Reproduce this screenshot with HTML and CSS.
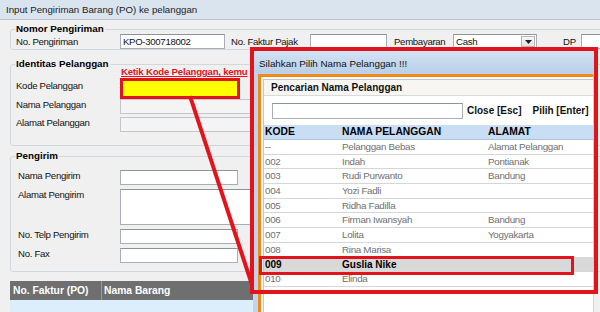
FILE: index.html
```html
<!DOCTYPE html>
<html>
<head>
<meta charset="utf-8">
<link rel="stylesheet" href="styles.css">
</head>
<body>
<div class="titlebar">Input Pengiriman Barang (PO) ke pelanggan</div>
<div class="content">
  <fieldset class="group g1">
    <legend>Nomor Pengiriman</legend>
    <div class="row1">
      <span class="lbl w104">No. Pengiriman</span>
      <div class="tb w105">KPO-300718002</div>
      <span class="lbl ml6 w79">No. Faktur Pajak</span>
      <div class="tb w77"></div>
      <span class="lbl ml7 w59">Pembayaran</span>
      <div class="tb combo w84"><span>Cash</span><span class="ddbtn"><svg width="7" height="4" viewBox="0 0 7 4"><path d="M0 0h7L3.5 4z" fill="#222"/></svg></span></div>
      <span class="lbl ml26 w18">DP</span>
      <div class="tb w100"></div>
    </div>
  </fieldset>

  <fieldset class="group g2">
    <legend>Identitas Pelanggan</legend>
    <div class="form f2">
      <span class="lbl up">Kode Pelanggan</span>
      <div class="tb kode"></div>
      <span class="lbl">Nama Pelanggan</span>
      <div class="tb dis w140"></div>
      <span class="lbl">Alamat Pelanggan</span>
      <div class="tb dis w140"></div>
    </div>
  </fieldset>

  <fieldset class="group g3">
    <legend>Pengirim</legend>
    <div class="form f3">
      <span class="lbl">Nama Pengirim</span>
      <div class="tb w118"></div>
      <span class="lbl">Alamat Pengirim</span>
      <div class="tb area w140"></div>
      <span class="lbl">No. Telp Pengirim</span>
      <div class="tb w118"></div>
      <span class="lbl">No. Fax</span>
      <div class="tb w118"></div>
    </div>
  </fieldset>

  <div class="table">
    <div class="thead">
      <div class="th c1">No. Faktur (PO)</div>
      <div class="th c2">Nama Barang</div>
    </div>
    <div class="trow"></div>
  </div>
</div>

<div class="hint">Ketik Kode Pelanggan, kemu</div>

<svg class="arrow" width="600" height="312" viewBox="0 0 600 312">
  <line x1="190" y1="96" x2="255" y2="294" stroke="#e2131b" stroke-width="4"/>
</svg>

<div class="dlg">
  <div class="dlg-title">Silahkan Pilih Nama Pelanggan !!!</div>
  <div class="panel">
    <div class="inner">
      <div class="phead">Pencarian Nama Pelanggan</div>
      <div class="search">
        <div class="tb w191"></div>
        <span class="btn">Close [Esc]</span>
        <span class="btn ml11">Pilih [Enter]</span>
      </div>
      <div class="grid">
        <div class="grow ghead"><span class="k">KODE</span><span class="n">NAMA PELANGGAN</span><span class="a">ALAMAT</span></div>
        <div class="grow"><span class="k">--</span><span class="n">Pelanggan Bebas</span><span class="a">Alamat Pelanggan</span></div>
        <div class="grow"><span class="k">002</span><span class="n">Indah</span><span class="a">Pontianak</span></div>
        <div class="grow"><span class="k">003</span><span class="n">Rudi Purwanto</span><span class="a">Bandung</span></div>
        <div class="grow"><span class="k">004</span><span class="n">Yozi Fadli</span><span class="a"></span></div>
        <div class="grow"><span class="k">005</span><span class="n">Ridha Fadilla</span><span class="a"></span></div>
        <div class="grow"><span class="k">006</span><span class="n">Firman Iwansyah</span><span class="a">Bandung</span></div>
        <div class="grow"><span class="k">007</span><span class="n">Lolita</span><span class="a">Yogyakarta</span></div>
        <div class="grow"><span class="k">008</span><span class="n">Rina Marisa</span><span class="a"></span></div>
        <div class="grow sel"><span class="k">009</span><span class="n">Guslia Nike</span><span class="a"></span></div>
        <div class="grow"><span class="k">010</span><span class="n">Elinda</span><span class="a"></span></div>
      </div>
    </div>
  </div>
</div>

<div class="redframe"></div>
<div class="redrow"></div>
</body>
</html>
```

FILE: styles.css
```css
* { box-sizing: border-box; }
html, body { margin: 0; padding: 0; }
body {
  width: 600px;
  height: 312px;
  overflow: hidden;
  position: relative;
  background: #f0f0f0;
  font-family: "Liberation Sans", Arial, sans-serif;
  font-size: 9.6px;
  letter-spacing: -0.3px;
  color: #111;
}
.titlebar {
  height: 20px;
  background: #dae4ef;
  border-bottom: 1px solid #bcc5cf;
  font-size: 9.7px;
  letter-spacing: 0;
  line-height: 12px;
  padding: 4px 0 0 6px;
  color: #1a1a1a;
}
.content { padding: 4px 0 0 10px; width: 760px; }

.group {
  border: 1px solid #d0d8de;
  border-radius: 3px;
  margin: 0;
  padding: 0;
  min-width: 0;
}
.group legend {
  font-weight: bold;
  font-size: 9.8px;
  letter-spacing: 0;
  line-height: 10px;
  padding: 0 1px;
  margin-left: 4px;
  color: #000;
}
.g2 { margin-top: 9px; }
.g3 { margin-top: 5px; }

.lbl { white-space: nowrap; }
.w104 { width: 104px; }
.w79 { width: 79px; }
.w59 { width: 59px; }
.w18 { width: 18px; }
.w105 { width: 105px; }
.w77 { width: 77px; }
.w84 { width: 84px; }
.w100 { width: 100px; }
.w118 { width: 118px; }
.w140 { width: 140px; }
.w191 { width: 191px; }
.ml6 { margin-left: 6px; }
.ml7 { margin-left: 7px; }
.ml11 { margin-left: 11px; }
.ml26 { margin-left: 26px; }

.row1 {
  display: flex;
  align-items: center;
  padding-left: 5px;
  height: 15px;
}
.tb {
  height: 15px;
  background: #fff;
  border: 1px solid #a9adb4;
  border-top-color: #8d939b;
  padding: 0 2px;
  line-height: 13px;
  white-space: nowrap;
  flex: none;
}
.tb.dis { background: #f4f4f4; border-color: #c3c6cb; }
.tb.area { height: 36px; }
.combo { display: flex; justify-content: space-between; padding-right: 1px; }
.ddbtn {
  width: 14px;
  height: 11px;
  margin-top: 1px;
  background: linear-gradient(#f6f6f6, #e2e2e2);
  border: 1px solid #b7b7b7;
  display: flex;
  align-items: center;
  justify-content: center;
}
.ddbtn svg { display: block; }

.form {
  display: grid;
  grid-template-columns: 104px auto;
  justify-content: start;
  align-items: start;
}
.form .lbl { line-height: 12px; }
.lbl.up { margin-top: -1px; }
.f2 { padding: 12px 0 13px 5px; row-gap: 3px; }
.f3 { padding: 9px 0 8px 7px; row-gap: 4px; grid-template-columns: 102px auto; }
.tb.kode {
  width: 120px;
  height: 21px;
  margin: -3px 0;
  background: #ffff00;
  border: 3px solid #e2131b;
}

.table { margin-top: 9px; width: 300px; }
.thead {
  display: flex;
  height: 19px;
  background: #6f6f6f;
  color: #fff;
  font-weight: bold;
  font-size: 10.3px;
  letter-spacing: 0;
  line-height: 19px;
}
.th.c1 { width: 92px; padding-left: 3px; border-right: 1px solid #9a9a9a; }
.th.c2 { padding-left: 2px; }
.trow { height: 20px; background: #dcedfc; }

.hint {
  position: absolute;
  left: 121px;
  top: 66px;
  color: #e2131b;
  font-weight: bold;
  font-size: 9.6px;
  letter-spacing: -0.2px;
  line-height: 12px;
  text-decoration: underline;
  white-space: nowrap;
}
.arrow { position: absolute; left: 0; top: 0; }

.dlg {
  position: absolute;
  left: 253px;
  top: 51px;
  width: 341px;
  height: 270px;
  background: #c0d5eb;
  padding: 0 1px 0 5px;
}
.dlg-title {
  height: 22px;
  margin: 0 -1px 0 -5px;
  padding: 7px 0 0 6px;
  background: linear-gradient(#d3e3f3, #b9d0e8);
  font-size: 9.8px;
  letter-spacing: 0;
  line-height: 12px;
  color: #111;
}
.panel {
  margin-top: 1px;
  height: 250px;
  border-top: 3px solid #f0891c;
  border-left: 3px solid #f0891c;
  background: #fbfaf8;
  padding: 2px 0 0 2px;
}
.inner {
  border-top: 1px solid #c6c6c6;
  border-left: 1px solid #c6c6c6;
  background: #fff;
  height: 100%;
}
.phead {
  height: 16px;
  padding-left: 7px;
  border-bottom: 1px solid #dadada;
  background: #f7f6f2;
  font-weight: bold;
  font-size: 10px;
  letter-spacing: 0;
  line-height: 15px;
  color: #111;
}
.search {
  height: 29px;
  display: flex;
  align-items: flex-start;
  padding: 7px 0 0 8px;
}
.search .tb { height: 16px; }
.btn {
  font-weight: bold;
  font-size: 10px;
  letter-spacing: 0;
  line-height: 16px;
  margin-left: 4px;
  white-space: nowrap;
}
.btn.ml11 { margin-left: 11px; }
.grow {
  display: flex;
  height: 14.7px;
  border-bottom: 1px solid #d6d6d6;
  color: #707070;
  font-size: 9.8px;
  line-height: 14px;
  white-space: nowrap;
}
.grow .k { width: 78px; padding-left: 1px; }
.grow .n { width: 146px; }
.ghead {
  height: 15px;
  background: #c9def5;
  border-bottom: 1px solid #aac3dd;
  color: #000;
  font-weight: bold;
  font-size: 10.3px;
  letter-spacing: 0;
}
.grow.sel {
  background: #d9d9d9;
  color: #000;
  font-weight: bold;
  font-size: 10px;
  letter-spacing: 0;
}

.redframe {
  position: absolute;
  left: 250px;
  top: 47px;
  width: 348px;
  height: 247px;
  border: 4px solid #e2131b;
}
.redrow {
  position: absolute;
  left: 259px;
  top: 256px;
  width: 315px;
  height: 19px;
  border: 3px solid #e2131b;
}
```
